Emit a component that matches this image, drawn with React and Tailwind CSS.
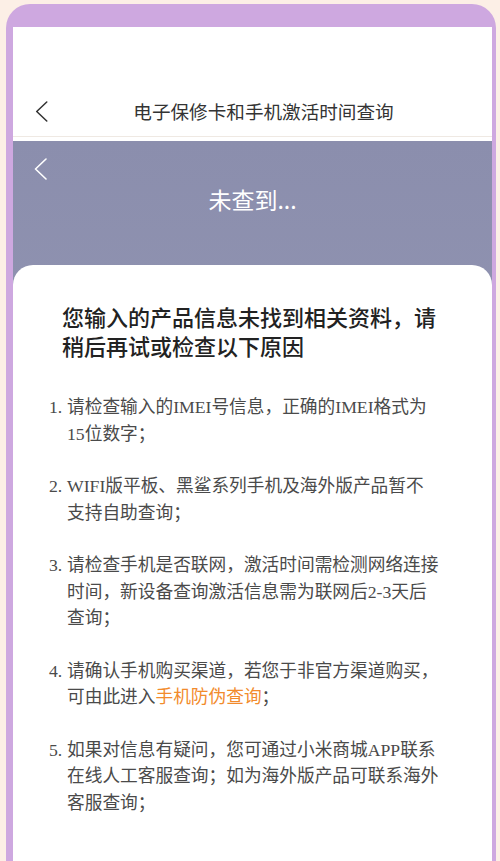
import React from 'react'

const reasons = [
  { n: '1.', text: <>请检查输入的IMEI号信息，正确的IMEI格式为15位数字；</> },
  { n: '2.', text: <>WIFI版平板、黑鲨系列手机及海外版产品暂不支持自助查询；</> },
  { n: '3.', text: <>请检查手机是否联网，激活时间需检测网络连接时间，新设备查询激活信息需为联网后2-3天后查询；</> },
  {
    n: '4.',
    text: (
      <>
        请确认手机购买渠道，若您于非官方渠道购买，可由此进入
        <span className="text-[#f28b2c]">手机防伪查询</span>；
      </>
    )
  },
  { n: '5.', text: <>如果对信息有疑问，您可通过小米商城APP联系在线人工客服查询；如为海外版产品可联系海外客服查询；</> }
]

function Chevron({ className }) {
  return (
    <svg viewBox="0 0 13 22" className={className} fill="none">
      <polyline points="12,1 1.5,11 12,21" stroke="currentColor" strokeWidth="1.6" strokeLinecap="round" strokeLinejoin="round" />
    </svg>
  )
}

export default function App() {
  return (
    <div className="h-[861px] overflow-hidden bg-[#fcefe6] pt-[4px] pl-[6px] pr-[4px] flex flex-col font-['Noto_Sans_CJK_SC',sans-serif]">
      {/* phone frame */}
      <div className="flex-1 flex flex-col rounded-t-[24px] bg-[#cea8e0] pt-[23px] pl-[7px] pr-[4px]">
        <div className="flex-1 flex flex-col bg-white overflow-hidden">
          {/* top bar */}
          <div className="pt-[72px]">
            <div className="grid grid-cols-[1fr_auto_1fr] items-center h-[24px] pl-[22px]">
              <Chevron className="w-[13px] h-[21px] text-[#333]" />
              <h1 className="text-[18.6px] leading-[24px] text-[#333]">电子保修卡和手机激活时间查询</h1>
              <div />
            </div>
            <div className="mt-[13px] border-b border-[#efe9e3]" />
            <div className="h-[4px]" />
          </div>

          {/* result band + card */}
          <div className="flex-1 flex flex-col bg-gradient-to-b from-[#8b8ead] to-[#9b9eb9]">
            <div className="pt-[17px] pl-[21px]">
              <Chevron className="w-[13px] h-[22px] text-white" />
            </div>
            <p className="mt-[3px] text-center text-[23px] leading-[32px] text-white">未查到...</p>

            <div className="mt-[50px] flex-1 rounded-t-[20px] bg-white pt-[37px] pl-[36px]">
              <h2 className="pl-[13px] w-[393px] text-[22px] leading-[29px] font-medium text-[#222]">
                您输入的产品信息未找到相关资料，请稍后再试或检查以下原因
              </h2>

              <ol className="mt-[34px] flex flex-col gap-[26px] font-['Liberation_Serif','Noto_Sans_CJK_SC',serif] text-[17.7px] leading-[26.5px] text-[#4a4a4a]">
                {reasons.map((r) => (
                  <li key={r.n} className="flex">
                    <span className="w-[18px] shrink-0">{r.n}</span>
                    <span className="w-[373px]">{r.text}</span>
                  </li>
                ))}
              </ol>
            </div>
          </div>
        </div>
      </div>
    </div>
  )
}
